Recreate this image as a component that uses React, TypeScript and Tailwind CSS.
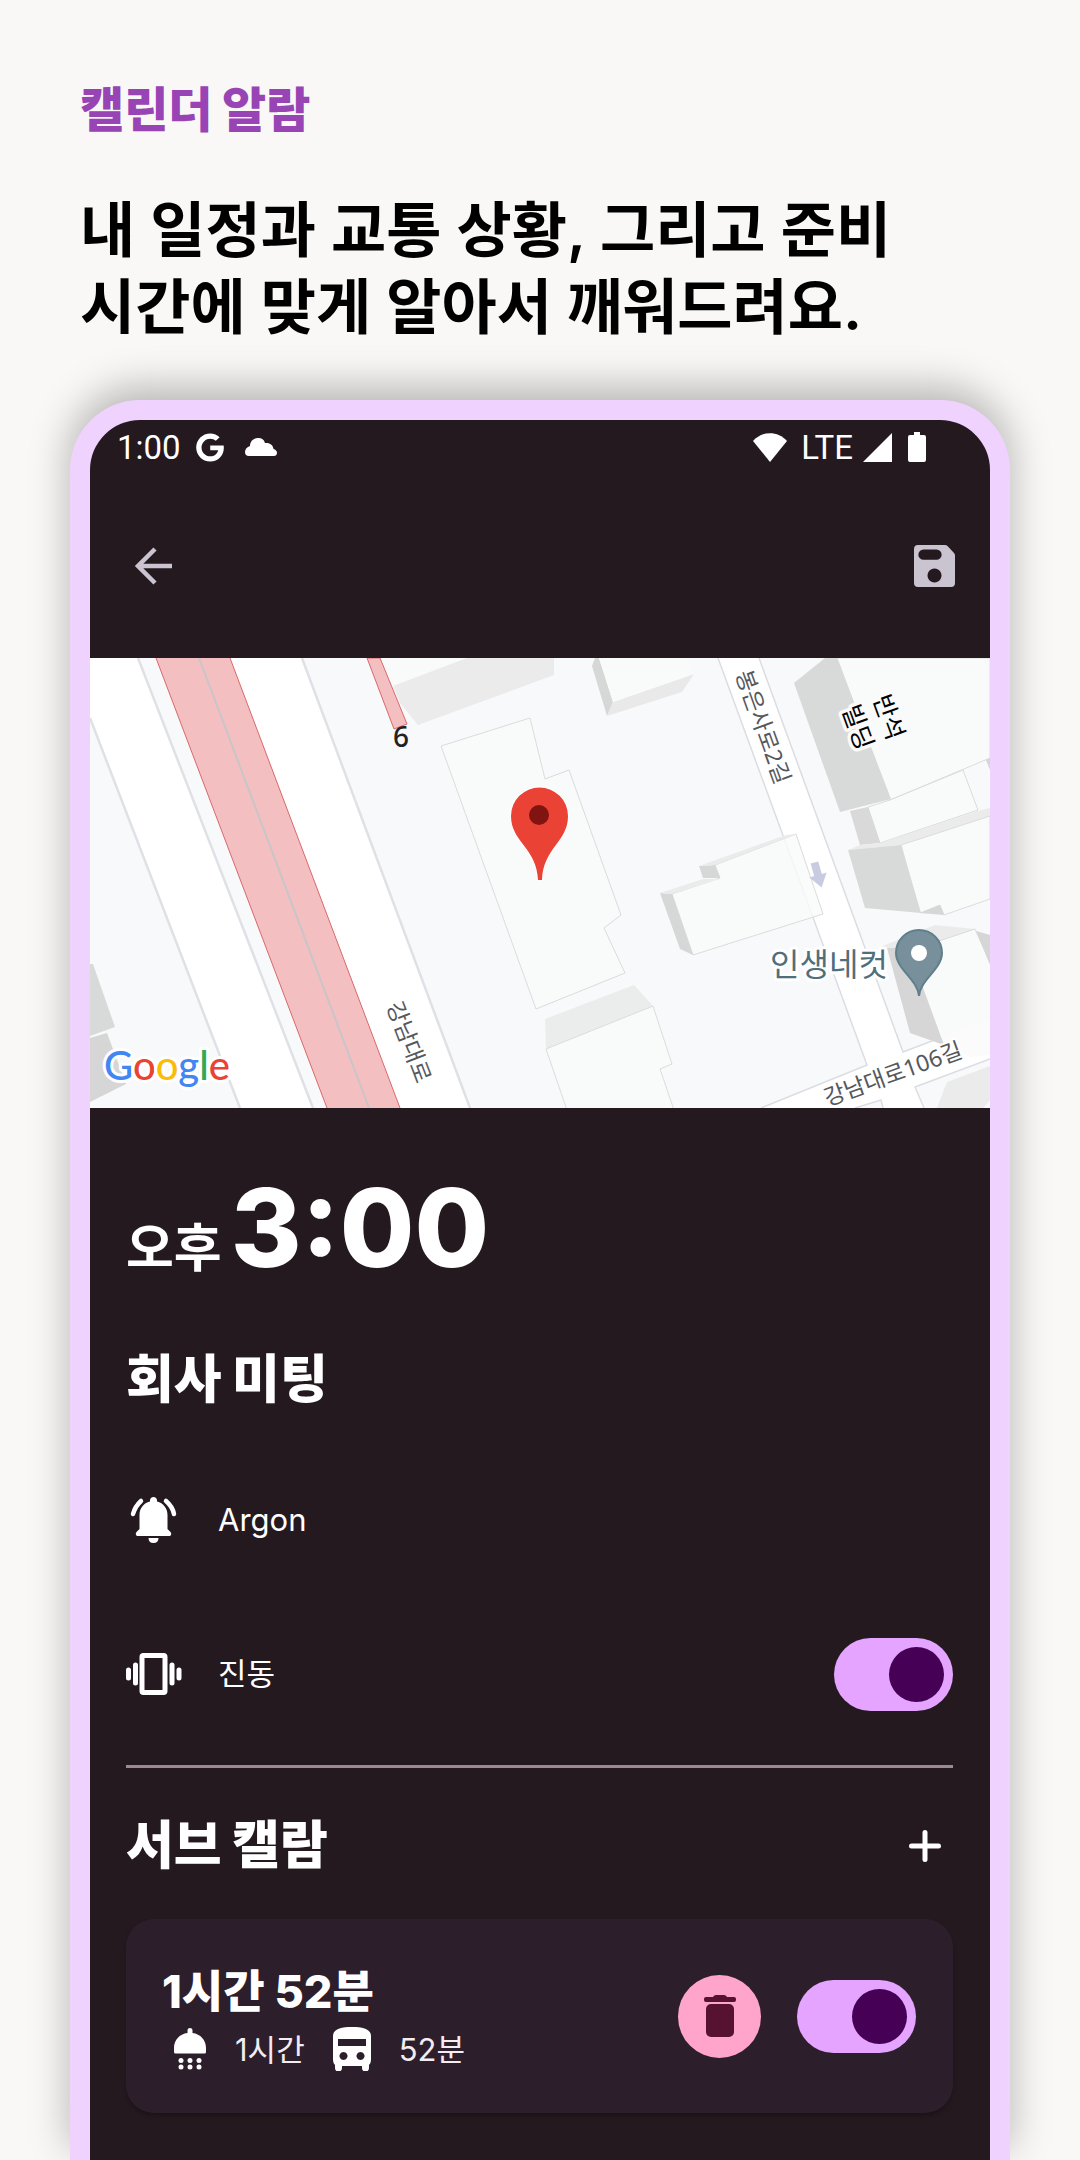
import { FaGoogle } from 'react-icons/fa'
import { useState } from 'react'

const building = { fill: '#f9fbfa', stroke: '#dadcdc', strokeWidth: 1 }

function StatusBar() {
  return (
    <div className="flex h-[54px] items-center pr-[64px] pl-[27px] font-['Roboto',sans-serif] text-[33px] leading-none text-white">
      <span>1:00</span>
      <FaGoogle className="ml-3.5 h-[29px] w-[30px]" />
      <svg viewBox="0 0 32 18" className="ml-5 h-[18px] w-8" fill="currentColor" aria-hidden="true">
        <path d="M4 18a4 4 0 0 1-4-4c0-3 2-5 5-6 0-5 4-8 8-8 3 0 6 1 7 5 5-.500 8 2 8.500 6 2 .5 3.500 2 3.500 4 0 2-1.500 3-3 3z" />
      </svg>
      <svg viewBox="0 0 34 29" className="ml-auto h-[29px] w-[34px]" fill="currentColor" aria-hidden="true">
        <path d="M0 8C9-2.500 25-2.500 34 8L17 29z" />
      </svg>
      <span className="ml-3.5">LTE</span>
      <svg viewBox="0 0 29 29" className="ml-2.5 h-[29px] w-[29px]" fill="currentColor" aria-hidden="true">
        <path d="M29 0v29H0z" />
      </svg>
      <svg viewBox="0 0 18 30" className="ml-4 h-[30px] w-[18px]" fill="currentColor" aria-hidden="true">
        <path d="M6 0h6v3h4q2 0 2 2v23q0 2-2 2H2q-2 0-2-2V5q0-2 2-2h4z" />
      </svg>
    </div>
  )
}

function TopBar() {
  return (
    <header className="flex h-[184px] items-center justify-between pr-[35px] pl-11 text-[#cac3d0]">
      <button type="button" aria-label="뒤로">
        <svg viewBox="0 0 40 40" className="h-10 w-10" fill="none" stroke="currentColor" strokeWidth="4.500" aria-hidden="true">
          <path d="M38 20H6M21 3 4 20l17 17" />
        </svg>
      </button>
      <button type="button" aria-label="저장">
        <svg viewBox="0 0 41 42" className="h-[42px] w-[41px]" fill="currentColor" aria-hidden="true">
          <path
            fillRule="evenodd"
            d="M4 0h27q1.500 0 2.500 1l6.500 7q1 1 1 2.500V38q0 4-4 4H4q-4 0-4-4V4q0-4 4-4zM9.500 4.500a5 5 0 0 0 0 10.300h13a5 5 0 0 0 0-10.300zM20.500 23.500a7 7 0 1 0 .01 0z"
          />
        </svg>
      </button>
    </header>
  )
}

function LocationMap() {
  return (
    <svg
      viewBox="0 0 900 450"
      className="block w-full font-['Noto_Sans','Noto_Sans_CJK_KR',sans-serif]"
      role="img"
      aria-label="약속 장소 지도"
    >
      <rect width="900" height="450" fill="#f8f9fb" />

      <g fill="#fff">
        <path d="M0 0H48L223 450H150L0 60z" />
        <path d="M140 0H212L380 450H310z" />
        <path d="M628 0H669L813 394 900 361V401L825 429 834 450H793L791 442 765 450H671L777 407z" />
      </g>
      <g fill="none" stroke="#dfe1e6" strokeWidth="2.500">
        <path d="M0 60 150 450M48 0 223 450M212 0 380 450" />
      </g>
      <g fill="none" stroke="#dcdde4" strokeWidth="1.500">
        <path d="M628 0 777 407 671 450M669 0 813 394 900 361M900 401 825 429 834 450M765 450 791 442 793 450" />
      </g>

      <path d="M66 0H140L310 450H237z" fill="#f4bfc0" />
      <path d="M66 0 237 450M140 0 310 450" stroke="#d9686b" strokeWidth="1" />
      <path d="M109 0 279 450" stroke="#c9c5c8" strokeWidth="2" />
      <path d="M277 0 304 71 317 66 290 0z" fill="#f4bfc0" stroke="#d9686b" strokeWidth="1" />

      <path d="M0 306H3L25 369 0 378z" fill="#d8dad9" />
      <path d="M0 380 17 375 36 426 0 444z" fill="#d6d6d6" />

      <path d="M291 0H377L303 28z" fill="#f9fbfa" fillOpacity="0.8" />
      <path d="M303 28 377 0H464V17L328 67 310 45z" fill="#ebebeb" />
      <path d="M351 88 440 60 455 121 479 112 531 257 514 270 535 315 446 351z" {...building} />
      <path d="M455 361 544 327 563 348 456 391z" fill="#ebeded" />
      <path d="M456 391 563 348 582 406 570 411 584 452H477z" {...building} />

      <path d="M502 8 505 0H509L523 44 517 58z" fill="#d6d8d7" />
      <path d="M523 44 604 16 592 34 517 58z" fill="#e9e9e9" />
      <path d="M509 0H598L604 16 523 44z" fill="#f9fbfa" />

      <path d="M582 236 630 220 625 207 706 176 733 256 603 297z" {...building} fillOpacity="0.8" />
      <path d="M570 235 582 236 603 297 590 291z" fill="#d6d8d7" />
      <path d="M570 235 613 221H630L582 236z" fill="#ebebeb" />
      <path d="M609 208 625 207 630 220H613z" fill="#d6d8d7" />
      <path d="M609 208 696 177 706 176 625 207z" fill="#ebebeb" />

      <path d="M747 0H900V100L800 142z" {...building} />
      <path d="M704 25 735 0H747L801 141 750 154z" fill="#d8dad9" />
      <path d="M800 142 873 112 888 152 790 185 778 149z" {...building} />
      <path d="M760 153 778 149 790 185 770 187z" fill="#d9d9d9" />
      <path d="M896 102 900 100V112z" fill="#d6d6d6" />
      <path d="M790 185 888 153 900 150V158L811 187 758 192 770 187z" fill="#ebebeb" />
      <path d="M811 187 900 158V241L854 257 850 247 830 255z" {...building} />
      <path d="M758 192 811 187 831 255 775 250z" fill="#d8dad9" />
      <path d="M830 255 850 247 854 257z" fill="#d6d6d6" />

      <path d="M790 289 845 267 885 271 810 296z" fill="#ebebeb" />
      <path d="M810 296 885 271 902 309V361L854 387z" {...building} />
      <path d="M854 378 900 361V397L880 399 854 387z" fill="#fbfbfb" />
      <path d="M797 290H818L835 335 854 387 820 375z" fill="#d6d6d6" />
      <path d="M886 273 900 277V307z" fill="#d6d6d6" />
      <path d="M847 450 857 424 900 408V442L893 450z" fill="#ebebeb" />

      <path d="M-4-13H4V0H9L0 13-9 0H-4z" fill="#c9cce0" transform="translate(728 217) rotate(-16)" />

      <g textAnchor="middle" fontSize="23" fill="#55585d" stroke="#fff" strokeWidth="4" paintOrder="stroke">
        <text transform="translate(319 384) rotate(69)" dy="8">강남대로</text>
        <text transform="translate(673 69) rotate(70)" dy="8">봉은사로2길</text>
        <text transform="translate(803 416) rotate(-20)" dy="8">강남대로106길</text>
        <text x="311" y="89" fontSize="28" fontWeight="500" fill="#222" stroke="none">6</text>
      </g>
      <g textAnchor="middle" fontSize="25" fontWeight="400" fill="#000" stroke="#fafafa" strokeWidth="7" strokeLinejoin="round" paintOrder="stroke">
        <text transform="translate(799 59) rotate(70)" dy="9">반석</text>
        <text transform="translate(768 69) rotate(70)" dy="9">빌딩</text>
      </g>
      <text x="739" y="318" textAnchor="middle" fontSize="32" fill="#4f6f7d" stroke="#fff" strokeWidth="6" strokeLinejoin="round" paintOrder="stroke">
        인생네컷
      </text>

      <path
        d="M829 338C828 322 806 311 806 295a23 23 0 0 1 46 0C852 311 830 322 829 338z"
        fill="#78909c"
        stroke="#607f8c"
        strokeWidth="2"
      />
      <circle cx="829" cy="295" r="8" fill="#fff" />

      <path
        d="M448 222C447 190 421 184 421 158a28.500 28.500 0 0 1 57 0C478 184 453 190 452 222z"
        fill="#ea4335"
        stroke="#fff"
        strokeWidth="2"
        paintOrder="stroke"
      />
      <circle cx="449" cy="157" r="10" fill="#811411" />

      <text
        x="14"
        y="422"
        fontSize="40"
        fontWeight="500"
        stroke="#fff"
        strokeWidth="6"
        strokeLinejoin="round"
        paintOrder="stroke"
        className="font-['Lato',sans-serif]"
      >
        <tspan fill="#4285f4">G</tspan>
        <tspan fill="#ea4335">o</tspan>
        <tspan fill="#fbbc04">o</tspan>
        <tspan fill="#4285f4">g</tspan>
        <tspan fill="#34a853">l</tspan>
        <tspan fill="#ea4335">e</tspan>
      </text>
    </svg>
  )
}

function Toggle({ label }: { label: string }) {
  const [on, setOn] = useState(true)

  return (
    <input
      type="checkbox"
      role="switch"
      aria-label={label}
      checked={on}
      onChange={() => setOn(!on)}
      className="flex h-[73px] w-[119px] shrink-0 cursor-pointer appearance-none items-center rounded-full bg-[#5b4b58] px-[9px] before:h-[55px] before:w-[55px] before:rounded-full before:bg-[#9b8a95] checked:justify-end checked:bg-[#e4a4ff] checked:before:bg-[#460055]"
    />
  )
}

function BellIcon() {
  return (
    <svg viewBox="0 0 56 56" className="h-14 w-14" fill="currentColor" aria-hidden="true">
      <path d="M27.500 5c2 0 3.500 1.500 3.500 3.500v1C37.500 11 41.500 16.500 41.500 23v14l3 3c1.500 2 .5 4-1.500 4h-31c-2 0-3-2-1.500-4l3-3V23c0-6.500 4-12 10.500-13.500v-1C24 6.500 25.500 5 27.500 5zM22.500 46h10q0 5-5 5t-5-5z" />
      <path d="M15 9Q9 14.500 7 22M40 9Q46.500 14.500 48 22" fill="none" stroke="currentColor" strokeWidth="4.500" strokeLinecap="round" />
    </svg>
  )
}

function VibrationIcon() {
  return (
    <svg viewBox="0 0 56 56" className="h-14 w-14" fill="none" stroke="currentColor" strokeWidth="5" strokeLinecap="round" aria-hidden="true">
      <rect x="16" y="9.500" width="23" height="37" rx="1.500" />
      <path d="M9.500 19v18M46 19v18M2.500 24v8M53 24v8" />
    </svg>
  )
}

function ShowerIcon() {
  return (
    <svg viewBox="0 0 34 42" className="h-[42px] w-[34px]" fill="currentColor" aria-hidden="true">
      <path d="M14.500 2.500a2.500 2.500 0 0 1 5 0V5C27.500 6 33 12 33 20v4q0 1.500-1.500 1.500h-29Q1 25.500 1 24v-4C1 12 6.500 6 14.500 5z" />
      {[8, 17, 26].map((x) => (
        <g key={x}>
          <circle cx={x} cy="32.500" r="2.500" />
          <circle cx={x} cy="39" r="2.500" />
        </g>
      ))}
    </svg>
  )
}

function BusIcon() {
  return (
    <svg viewBox="0 0 38 44" className="h-11 w-[38px]" fill="currentColor" aria-hidden="true">
      <path
        fillRule="evenodd"
        d="M0 9C0 2 8 0 19 0s19 2 19 9v24q0 3-2 5v3a3.500 3.500 0 0 1-7 0v-2H9v2a3.500 3.500 0 0 1-7 0v-3q-2-2-2-5zM5 12v7h28v-7zM10.500 25a4 4 0 1 0 .01 0zM27.500 25a4 4 0 1 0 .01 0z"
      />
    </svg>
  )
}

function SubAlarmCard() {
  return (
    <article className="mt-[37px] flex h-[194px] items-center rounded-[28px] bg-[#2d1e2c] pr-[37px] pl-9 shadow-[0_3px_4px_rgba(0,0,0,0.25)]">
      <div className="min-w-0 flex-1 pt-2.5">
        <h3 className="text-[45px] leading-[56px] font-extrabold">1시간 52분</h3>
        <div className="flex h-[58px] items-center text-[31px] leading-none text-[#f3edf2]">
          <span className="ml-[11px] text-white">
            <ShowerIcon />
          </span>
          <span className="ml-7">1시간</span>
          <span className="ml-7 text-white">
            <BusIcon />
          </span>
          <span className="ml-7">52분</span>
        </div>
      </div>
      <button
        type="button"
        aria-label="삭제"
        className="mr-9 flex h-[83px] w-[83px] items-center justify-center rounded-full bg-[#ffa5cc] text-[#571232]"
      >
        <svg viewBox="0 0 32 42" className="h-[42px] w-8" fill="currentColor" aria-hidden="true">
          <path d="M9 2q1-2 3-2h8q2 0 3 2h7q2 0 2 2v1q0 2-2 2H2Q0 7 0 5V4q0-2 2-2z" />
          <rect x="2" y="9" width="28" height="33" rx="5" />
        </svg>
      </button>
      <Toggle label="서브 캘람 사용" />
    </article>
  )
}

export default function App() {
  return (
    <main className="flex min-h-screen flex-col overflow-hidden bg-[#f9f8f6] px-[70px] pt-[81px] font-['Inter','Noto_Sans_CJK_KR',sans-serif]">
      <p className="px-2.5 text-[48px] leading-[58px] font-black text-[#9844b5]">캘린더 알람</p>
      <h1 className="mt-[53px] px-2.5 text-[60px] leading-[77px] font-semibold text-black">
        내 일정과 교통 상황, 그리고 준비
        <br />
        시간에 맞게 알아서 깨워드려요.
      </h1>

      <div className="mt-[54px] flex-1 overflow-hidden rounded-t-[70px] border-20 border-b-0 border-[#f0d2fe] bg-[#24191f] text-white shadow-[0_-12px_40px_rgba(0,0,0,0.28)]">
        <StatusBar />
        <TopBar />
        <LocationMap />

        <section className="pt-[66px] pr-[37px] pl-9">
          <p className="flex items-baseline gap-[9px]">
            <span className="text-[52px] leading-[72px] font-bold">오후</span>
            <time className="text-[108px] leading-[108px] font-extrabold">3:00</time>
          </p>
          <h2 className="mt-[59px] text-[52px] leading-[72px] font-black">회사 미팅</h2>

          <div className="mt-[62px] flex h-[84px] items-center gap-9 text-[31px]">
            <BellIcon />
            <span>Argon</span>
          </div>
          <div className="mt-[70px] flex h-[84px] items-center gap-9 text-[31px]">
            <VibrationIcon />
            <span className="flex-1">진동</span>
            <Toggle label="진동" />
          </div>

          <hr className="mt-[49px] border-t-3 border-[#9b8a95]" />

          <div className="mt-[42px] flex h-[72px] items-center justify-between pr-3">
            <h2 className="text-[52px] leading-[72px] font-black">서브 캘람</h2>
            <button type="button" aria-label="서브 캘람 추가">
              <svg viewBox="0 0 32 32" className="h-8 w-8" stroke="currentColor" strokeWidth="5" strokeLinecap="round" aria-hidden="true">
                <path d="M16 2.500v27M2.500 16h27" />
              </svg>
            </button>
          </div>

          <SubAlarmCard />
        </section>
      </div>
    </main>
  )
}
